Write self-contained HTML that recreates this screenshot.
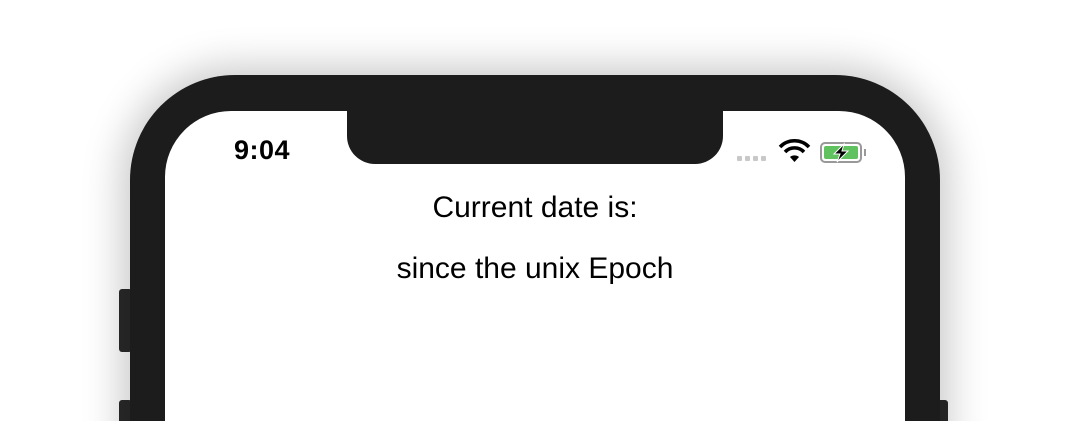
<!DOCTYPE html>
<html><head><style>
html,body{margin:0;padding:0;width:1070px;height:421px;overflow:hidden;background:#fff;font-family:"Liberation Sans",sans-serif}
.wrap{position:relative;width:1070px;height:421px;overflow:hidden}
.phone{position:absolute;left:130px;top:75px;width:810px;height:700px;background:#1c1c1c;border-radius:105px;box-shadow:0 0 40px 8px rgba(0,0,0,0.22)}
.screen{position:absolute;left:165px;top:111px;width:740px;height:600px;background:#fff;border-radius:66px}
.notch{position:absolute;left:347px;top:100px;width:376px;height:64px;background:#1c1c1c;border-radius:0 0 28px 28px}
.btn{position:absolute;background:#2a2a2a;border-radius:3px}
.t{position:absolute;left:0;width:1070px;text-align:center;font-size:30px;color:#000}
</style></head><body><div class="wrap">
<div class="btn" style="left:119px;top:289px;width:13px;height:63px"></div>
<div class="btn" style="left:119px;top:400px;width:13px;height:40px"></div>
<div class="btn" style="left:937px;top:400px;width:11px;height:40px"></div>
<div class="phone"></div>
<div class="screen"></div>
<div class="notch"></div>
<div style="position:absolute;left:234px;top:135px;font-size:27px;font-weight:bold;letter-spacing:0.5px">9:04</div>
<svg style="position:absolute;left:735px;top:136px" width="140" height="30" viewBox="0 0 140 30">
<g fill="#c8c8c8"><rect x="2" y="20" width="5" height="5" rx="1"/><rect x="10" y="20" width="5" height="5" rx="1"/><rect x="18" y="20" width="5" height="5" rx="1"/><rect x="26" y="20" width="5" height="5" rx="1"/></g>
<path d="M45 11 A20 20 0 0 1 74 11" stroke="#000" stroke-width="3.5" fill="none"/>
<path d="M50 16 A13 13 0 0 1 69 16" stroke="#000" stroke-width="3.5" fill="none"/>
<path d="M55 21 L59.5 26 L64 21 A7 7 0 0 0 55 21Z" fill="#000"/>
<rect x="86" y="7" width="40" height="19" rx="4" fill="none" stroke="#999" stroke-width="2"/>
<rect x="89" y="10" width="34" height="13" rx="2" fill="#5fc25f"/>
<rect x="129" y="13" width="2" height="7" fill="#999"/>
<path d="M109 8 L99 18 H105 L102 26 L113 15 H107 Z" fill="#000" stroke="#fff" stroke-width="1"/>
</svg>
<div class="t" style="top:191px">Current date is:</div>
<div class="t" style="top:252px">since the unix Epoch</div>
</div></body></html>
